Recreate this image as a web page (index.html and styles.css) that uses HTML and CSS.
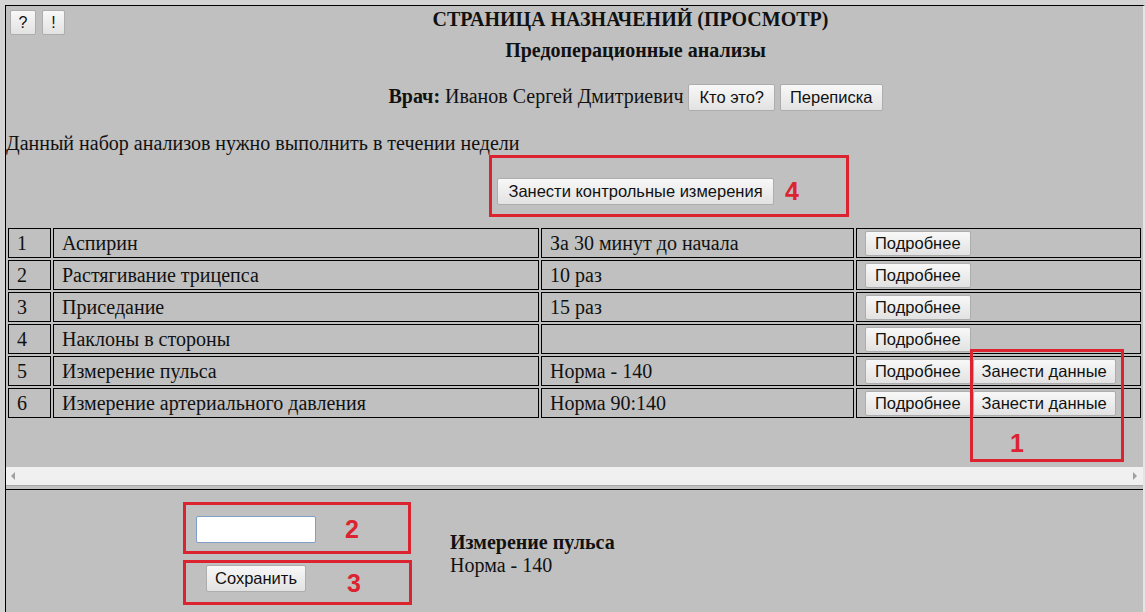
FILE: index.html
```html
<!DOCTYPE html>
<html lang="ru">
<head>
<meta charset="utf-8">
<title>Страница назначений</title>
<link rel="stylesheet" href="styles.css">
</head>
<body>
<div class="window">
  <div class="frame-top">
    <div class="top-content">
      <div class="tools">
        <button class="btn sq">?</button>
        <button class="btn sq">!</button>
      </div>
      <div class="header">
        <h1 class="title">СТРАНИЦА НАЗНАЧЕНИЙ (ПРОСМОТР)</h1>
        <h2 class="subtitle">Предоперационные анализы</h2>
        <div class="doctor"><span class="doc-text"><b>Врач:</b> Иванов Сергей Дмитриевич</span><button class="btn wide">Кто это?</button><button class="btn">Переписка</button></div>
      </div>
      <p class="note">Данный набор анализов нужно выполнить в течении недели</p>
      <div class="measure">
        <button class="btn wide">Занести контрольные измерения</button>
        <div class="mark mark-4"><span>4</span></div>
      </div>
      <table class="plan">
        <tr><td class="c-num">1</td><td class="c-name">Аспирин</td><td class="c-val">За 30 минут до начала</td><td class="c-act"><button class="btn">Подробнее</button></td></tr>
        <tr><td class="c-num">2</td><td class="c-name">Растягивание трицепса</td><td class="c-val">10 раз</td><td class="c-act"><button class="btn">Подробнее</button></td></tr>
        <tr><td class="c-num">3</td><td class="c-name">Приседание</td><td class="c-val">15 раз</td><td class="c-act"><button class="btn">Подробнее</button></td></tr>
        <tr><td class="c-num">4</td><td class="c-name">Наклоны в стороны</td><td class="c-val"></td><td class="c-act"><button class="btn">Подробнее</button></td></tr>
        <tr><td class="c-num">5</td><td class="c-name">Измерение пульса</td><td class="c-val">Норма - 140</td><td class="c-act"><button class="btn">Подробнее</button><button class="btn extra">Занести данные</button></td></tr>
        <tr><td class="c-num">6</td><td class="c-name">Измерение артериального давления</td><td class="c-val">Норма 90:140</td><td class="c-act"><button class="btn">Подробнее</button><button class="btn extra">Занести данные</button></td></tr>
      </table>
      <div class="mark mark-1"><span>1</span></div>
    </div>
    <div class="hscroll">
      <span class="arrow arrow-left"></span>
      <span class="arrow arrow-right"></span>
    </div>
  </div>
  <div class="frame-bottom">
    <div class="entry">
      <input class="field" type="text">
      <button class="btn">Сохранить</button>
      <div class="mark mark-2"><span>2</span></div>
      <div class="mark mark-3"><span>3</span></div>
    </div>
    <div class="info">
      <b>Измерение пульса</b><br>
      Норма - 140
    </div>
  </div>
</div>
</body>
</html>
```

FILE: styles.css
```css
html, body {
  margin: 0;
  padding: 0;
  height: 100%;
}
body {
  background: #d4d4d4;
  font-family: "Liberation Serif", "Times New Roman", serif;
  font-size: 20px;
  color: #111;
  overflow: hidden;
}
.window {
  margin: 5px 0 0 5px;
  height: 607px;
  border-top: 1px solid #000;
  border-left: 1px solid #000;
  display: flex;
  flex-direction: column;
  background: #c0c0c0;
  border-right: 2px solid #e4e4e4;
}
.frame-top {
  display: flex;
  flex-direction: column;
  border-bottom: 1px solid #000;
}
.top-content {
  position: relative;
  height: 461px;
  overflow: hidden;
}
.btn {
  font-family: "Liberation Sans", Arial, sans-serif;
  font-size: 16.5px;
  color: #111;
  background: linear-gradient(#f8f8f8, #e2e2e2);
  border: 1px solid #adadad;
  border-radius: 2px;
  padding: 3px 9px;
  line-height: 19px;
  margin: 0;
  cursor: default;
}
.btn.wide {
  padding: 3px 10px;
}
.tools {
  float: left;
  padding: 4px 0 0 4px;
  display: flex;
  gap: 6px;
}
.btn.sq {
  width: 26px;
  height: 25px;
  padding: 0;
  font-size: 16px;
}
.btn.sq:last-child {
  width: 23px;
}
.header {
  text-align: center;
  padding-left: 122px;
}
.title {
  margin: 0;
  padding: 2px 10px 0 0;
  font-size: 20px;
  line-height: 23px;
  font-weight: bold;
}
.subtitle {
  margin: 8px 0 0;
  font-size: 20px;
  line-height: 23px;
  font-weight: bold;
}
.doctor {
  margin-top: 22px;
  display: flex;
  justify-content: center;
  align-items: baseline;
  gap: 5px;
}
.doc-text {
  line-height: 23px;
}
.note {
  margin: 21px 0 0;
  line-height: 23px;
}
.measure {
  position: relative;
  display: flex;
  justify-content: center;
  padding-left: 122px;
  margin-top: 23px;
}
.plan {
  margin-top: 21px;
  width: 1137px;
  border-collapse: separate;
  border-spacing: 2px;
}
.plan td {
  border: 1px solid #000;
  height: 30px;
  padding: 0 8px;
  box-sizing: border-box;
  line-height: 22px;
  vertical-align: middle;
  white-space: nowrap;
}
.plan .c-num { width: 43px; }
.plan .c-name { width: 486px; }
.plan .c-val { width: 313px; }
.plan .c-act { padding: 1px 8px 0; }
.plan .btn { padding: 2px 9px; }
.plan .btn.extra {
  margin-left: 2px;
  padding: 2px 8px;
}
.mark {
  position: absolute;
  border: 3px solid #dc2431;
  box-sizing: border-box;
  pointer-events: none;
}
.mark span {
  position: absolute;
  font-family: "Liberation Sans", Arial, sans-serif;
  font-weight: bold;
  font-size: 25px;
  color: #dc2431;
  line-height: 1;
}
.mark-4 {
  left: 483px;
  top: -23px;
  width: 360px;
  height: 62px;
}
.mark-4 span { left: 293px; top: 21px; }
.mark-1 {
  left: 964px;
  top: 343px;
  width: 154px;
  height: 113px;
}
.mark-1 span { left: 37px; top: 79px; }
.hscroll {
  position: relative;
  height: 18px;
  background: #f0f0f0;
  border-bottom: 1px solid #a8a8a8;
  margin-bottom: 3px;
}
.arrow {
  position: absolute;
  top: 5px;
  width: 0;
  height: 0;
  border-top: 4px solid transparent;
  border-bottom: 4px solid transparent;
}
.arrow-left {
  left: 5px;
  border-right: 4px solid #a0a0a0;
}
.arrow-right {
  right: 6px;
  border-left: 4px solid #a0a0a0;
}
.frame-bottom {
  flex: 1;
  display: flex;
  align-items: center;
  padding-top: 5px;
}
.entry {
  position: relative;
  margin-left: 190px;
  width: 120px;
  display: flex;
  flex-direction: column;
  align-items: center;
  gap: 22px;
}
.field {
  width: 120px;
  height: 27px;
  box-sizing: border-box;
  border: 1px solid #7f9fcb;
  border-radius: 2px;
  background: #fff;
  margin: 0;
}
.entry .btn {
  padding: 3px 8px;
}
.mark-2 {
  left: -13px;
  top: -14px;
  width: 228px;
  height: 52px;
}
.mark-2 span { left: 159px; top: 12px; }
.mark-3 {
  left: -13px;
  top: 44px;
  width: 229px;
  height: 45px;
}
.mark-3 span { left: 161px; top: 8px; }
.info {
  margin-left: 134px;
  line-height: 23px;
}
```
